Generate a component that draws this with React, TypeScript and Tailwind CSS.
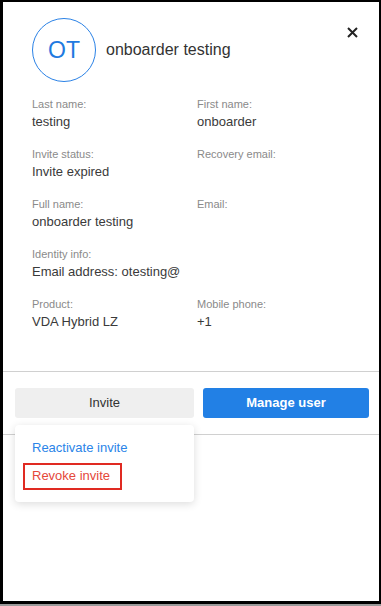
const fields = [
  { label: 'Last name:', value: 'testing' },
  { label: 'First name:', value: 'onboarder' },
  { label: 'Invite status:', value: 'Invite expired' },
  { label: 'Recovery email:', value: '' },
  { label: 'Full name:', value: 'onboarder testing' },
  { label: 'Email:', value: '' },
  { label: 'Identity info:', value: 'Email address: otesting@' },
  { label: '', value: '' },
  { label: 'Product:', value: 'VDA Hybrid LZ' },
  { label: 'Mobile phone:', value: '+1' },
];

export default function App() {
  return (
    <div className="w-[381px] h-[606px] bg-[#9a9a9a] pb-[2px] font-['Liberation_Sans',Arial,sans-serif]">
      <div className="relative flex h-full flex-col border-b-[3px] border-l-[3px] border-r-2 border-t-2 border-black bg-white">
        <div className="flex items-start justify-between pl-[29px] pr-[21px] pt-[16px]">
          <div className="flex items-center">
            <div className="flex h-16 w-16 items-center justify-center rounded-full border border-[#2b82e6] text-[23px] text-[#1f7ae0]">
              OT
            </div>
            <span className="ml-[10px] text-[16px] text-[#333]">onboarder testing</span>
          </div>
          <button className="mt-[9px] text-[#222]">
            <svg width="11" height="11" viewBox="0 0 11 11">
              <path d="M1 1L10 10M10 1L1 10" stroke="currentColor" strokeWidth="2" />
            </svg>
          </button>
        </div>

        <div className="mt-[15px] grid grid-cols-[165px_1fr] gap-y-4 pl-[29px]">
          {fields.map((f, i) => (
            <div key={i} className="h-[34px]">
              <div className="h-[14px] text-[11px] leading-[14px] text-[#8a8a8a]">{f.label}</div>
              <div className="mt-[2px] h-[18px] text-[13px] leading-[18px] text-[#3a3a3a]">{f.value}</div>
            </div>
          ))}
        </div>

        <div className="mt-[40px] border-t border-[#d0d0d0]" />

        <div className="relative flex gap-[9px] pl-[12px] pt-[16px]">
          <button className="h-[30px] w-[179px] rounded-[3px] bg-[#efefef] text-[13px] text-[#333]">Invite</button>
          <button className="h-[30px] w-[166px] rounded-[3px] bg-[#2280e5] text-[13px] font-bold text-white">Manage user</button>
        </div>

        <div className="relative mt-[16px] border-t border-[#d0d0d0]">
          <div className="absolute left-[12px] top-[-10px] flex h-[77px] w-[179px] flex-col rounded-[4px] bg-white pl-[17px] pt-[14px] shadow-[0_2px_8px_rgba(0,0,0,0.14)]">
            <span className="text-[13px] leading-[18px] text-[#2a84e8]">Reactivate invite</span>
            <span className="-ml-[9px] mt-[6px] inline-flex h-[27px] w-[99px] items-center border-2 border-[#e02a22] pb-[2px] pl-[7px] text-[13px] text-[#e5483b]">
              Revoke invite
            </span>
          </div>
        </div>
      </div>
    </div>
  );
}
